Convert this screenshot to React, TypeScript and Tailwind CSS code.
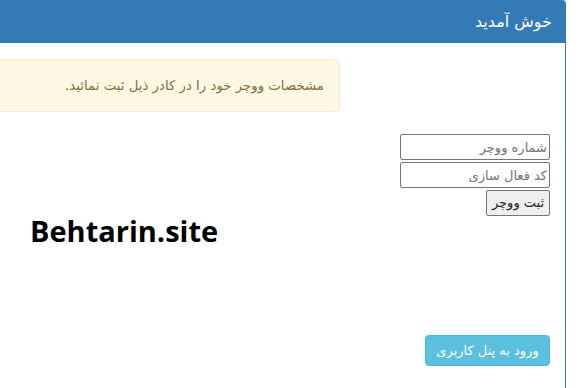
const fa = { fontFamily: '"DejaVu Sans", sans-serif' };

export default function App() {
  return (
    <div className="h-[388px] w-[583px] overflow-hidden bg-white" style={fa}>
      <div dir="rtl" className="flex h-[400px] w-[566px] flex-col rounded-tr-[4px] border-r border-[#337ab7]">
        <div className="flex h-[43px] items-center rounded-tr-[3px] bg-[#337ab7] px-[13px] text-[16px] text-white">
          خوش آمدید
        </div>
        <div className="flex flex-col pt-4 pr-[15px]">
          <div dir="ltr" className="flex justify-start">
            <div
              dir="rtl"
              className="ml-[-4px] flex h-[53px] w-[344px] items-center rounded-[4px] border border-[#faebcc] bg-[#fcf8e3] px-[15px] text-[13.3px] text-[#8a6d3b]"
            >
              مشخصات ووچر خود را در کادر ذیل ثبت نمائید.
            </div>
          </div>

          <form className="mt-[22px] flex flex-col items-start gap-[2px]">
            <input
              placeholder="شماره ووچر"
              className="h-[26px] w-[150px] rounded-[2px] border border-[#767676] px-[2px] text-[13px] placeholder:text-[#757575]"
              style={fa}
            />
            <input
              placeholder="کد فعال سازی"
              className="h-[26px] w-[150px] rounded-[2px] border border-[#767676] px-[2px] text-[13px] placeholder:text-[#757575]"
              style={fa}
            />
            <button
              type="button"
              className="h-[26px] w-[64px] rounded-[2px] border border-[#767676] bg-[#efefef] text-[13px] font-normal text-[#222]"
              style={fa}
            >
              ثبت ووچر
            </button>
          </form>

          <div dir="ltr" className="mt-[-3px] pl-[30px]">
            <span
              className="text-[29px] font-bold leading-[36px] text-black"
              style={{ fontFamily: '"Open Sans", sans-serif' }}
            >
              Behtarin.site
            </span>
          </div>

          <div className="mt-[86px] flex justify-start">
            <button
              type="button"
              className="h-[31px] w-[125px] rounded-[4px] border border-[#46b8da] bg-[#5bc0de] text-[13px] text-white"
              style={fa}
            >
              ورود به پنل کاربری
            </button>
          </div>
        </div>
      </div>
    </div>
  );
}
